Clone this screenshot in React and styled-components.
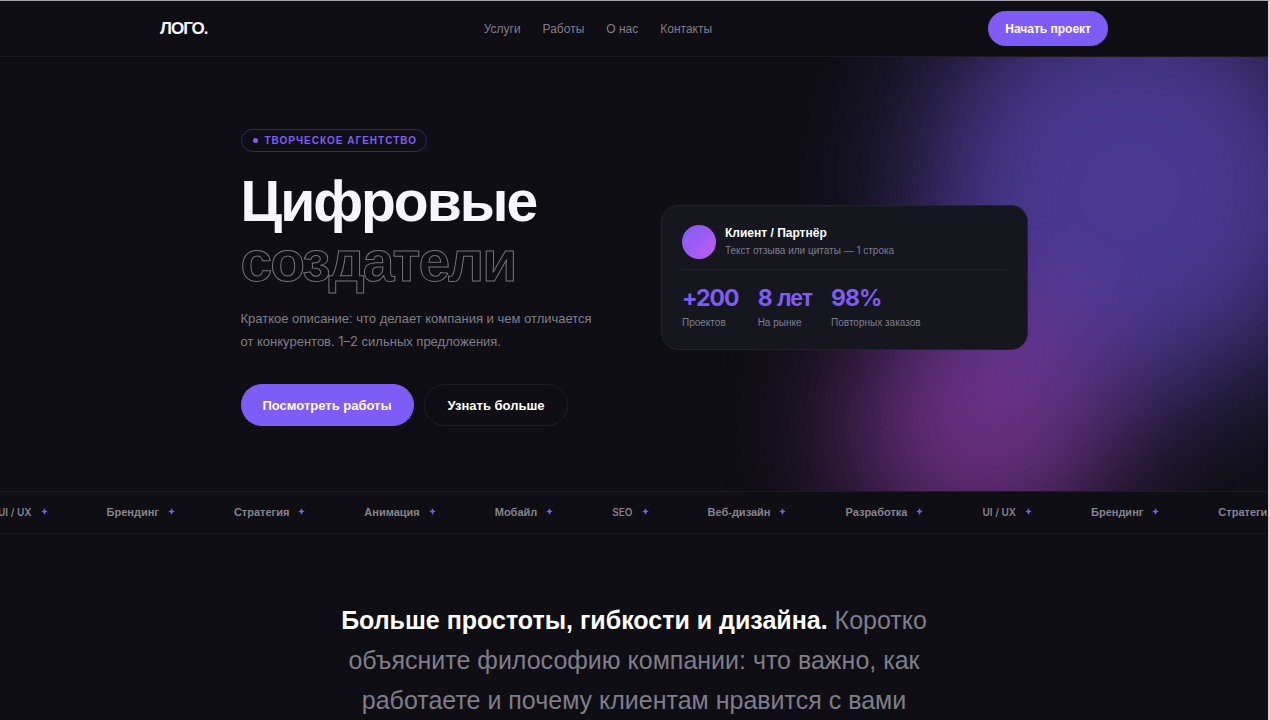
import React from "react";
import styled, { createGlobalStyle } from "styled-components";

const GlobalStyle = createGlobalStyle`
  * { box-sizing: border-box; }
  body {
    margin: 0;
    background: #0f0e14;
    color: #f7f5ff;
    font-family: "Liberation Sans", Arial, sans-serif;
    overflow: hidden;
  }
`;

const Page = styled.div`
  height: 100vh;
  overflow: hidden;
  border-top: 1px solid #a4a6ab;
  border-right: 2px solid #d4d4da;
`;

const Header = styled.header`
  border-bottom: 1px solid #1c1b23;
`;

const HeaderInner = styled.div`
  display: flex;
  justify-content: space-between;
  align-items: center;
  max-width: 948px;
  height: 55px;
  margin: 0 auto;
`;

const Logo = styled.a`
  color: #f7f5ff;
  font-size: 17px;
  font-weight: 700;
  letter-spacing: -1px;
  text-decoration: none;
`;

const Nav = styled.nav`
  display: flex;
  gap: 22px;
`;

const NavLink = styled.a`
  color: #7f7d8a;
  font-size: 12px;
  text-decoration: none;
`;

const Button = styled.button`
  height: ${(p) => (p.$small ? 35 : 42)}px;
  padding: 0 ${(p) => (p.$small ? 16 : p.$ghost ? 23 : 21)}px;
  border: 1px solid ${(p) => (p.$ghost ? "#1f1e27" : "#7e5cf6")};
  border-radius: 24px;
  background: ${(p) => (p.$ghost ? "transparent" : "#7e5cf6")};
  color: #fff;
  font-family: inherit;
  font-size: ${(p) => (p.$small ? 12 : 13)}px;
  font-weight: 700;
  white-space: nowrap;
`;

const Hero = styled.section`
  position: relative;
  overflow: hidden;
  padding: 72px 24px 65px;
`;

const Glow = styled.div`
  position: absolute;
  border-radius: 50%;
  pointer-events: none;
`;

const VioletGlow = styled(Glow)`
  top: -78px;
  right: -73px;
  width: 420px;
  height: 420px;
  background: #7c5cfc;
  filter: blur(66px);
  opacity: 0.54;
`;

const PinkGlow = styled(Glow)`
  right: 156px;
  bottom: -66px;
  width: 264px;
  height: 264px;
  background: #c04fe8;
  filter: blur(62px);
  opacity: 0.5;
`;

const HeroInner = styled.div`
  position: relative;
  display: grid;
  grid-template-columns: 1fr 1fr;
  gap: 54px;
  align-items: center;
  max-width: 787px;
  margin: 0 auto;
`;

const Intro = styled.div`
  white-space: nowrap;
`;

const Badge = styled.div`
  display: inline-flex;
  align-items: center;
  gap: 7px;
  height: 23px;
  padding: 0 9px 0 11px;
  border: 1px solid #33285f;
  border-radius: 12px;
  color: #7e5cf6;
  font-size: 10px;
  font-weight: 700;
  letter-spacing: 1px;
  text-transform: uppercase;
  vertical-align: top;
`;

const BadgeDot = styled.span`
  width: 5px;
  height: 5px;
  border-radius: 50%;
  background: #7e5cf6;
`;

const Title = styled.h1`
  margin: 19px 0 16px;
  font-size: 57px;
  font-weight: 700;
  line-height: 60px;
  letter-spacing: -2px;
`;

const Outline = styled.span`
  display: block;
  color: transparent;
  -webkit-text-stroke: 1px #74737a;
`;

const Lead = styled.p`
  margin: 0 0 31px;
  color: #7f7d8a;
  font-size: 13px;
  line-height: 23px;
`;

const Actions = styled.div`
  display: flex;
  gap: 10px;
`;

const Card = styled.article`
  padding: 18px 20px;
  border: 1px solid #24232d;
  border-radius: 17px;
  background: #16161f;
`;

const Client = styled.div`
  display: flex;
  align-items: center;
  gap: 9px;
  padding-bottom: 10px;
  border-bottom: 1px solid #24232d;
`;

const Avatar = styled.div`
  width: 34px;
  height: 34px;
  border-radius: 50%;
  background: linear-gradient(135deg, #7e5cf6, #c05cf0);
`;

const ClientName = styled.div`
  color: #fff;
  font-size: 12px;
  font-weight: 700;
  line-height: 18px;
`;

const Muted = styled.div`
  color: #7f7d8a;
  font-size: 10px;
  line-height: 17px;
`;

const Stats = styled.div`
  display: flex;
  gap: 19px;
  padding-top: 12px;
`;

const StatValue = styled.div`
  color: #7e5cf6;
  font-family: ${(p) => (p.$cyrillic ? '"Liberation Sans"' : "Inter")}, sans-serif;
  font-size: 23px;
  font-weight: 700;
  line-height: 32px;
  letter-spacing: -1px;
`;

const Latin = styled.span`
  font-family: Inter, sans-serif;
`;

const Ticker = styled.div`
  display: flex;
  align-items: center;
  height: 43px;
  padding-bottom: 2px;
  overflow: hidden;
  border-top: 1px solid #1c1b23;
  border-bottom: 1px solid #1c1b23;
`;

const TickerTrack = styled.div`
  display: flex;
  flex: none;
  gap: 59px;
  margin-left: -2px;
`;

const TickerItem = styled.span`
  display: flex;
  align-items: center;
  gap: 9px;
  color: #858390;
  font-family: ${(p) => (p.$latin ? "Inter" : '"Liberation Sans"')}, sans-serif;
  font-size: ${(p) => (p.$latin ? 10 : 11)}px;
  font-weight: ${(p) => (p.$latin ? 600 : 700)};
  line-height: 16px;
`;

const Spark = () => (
  <svg width="7" height="7" viewBox="0 0 8 8" fill="#7e5cf6" aria-hidden="true">
    <path d="M4 .4 5.2 2.8 7.6 4 5.2 5.2 4 7.6 2.8 5.2 .4 4 2.8 2.8Z" />
  </svg>
);

const About = styled.section`
  max-width: 640px;
  margin: 0 auto;
  padding: 66px 16px;
`;

const Statement = styled.p`
  margin: 0;
  color: #7f7d8a;
  font-size: 25px;
  line-height: 40px;
  text-align: center;

  strong { color: #fff; }
`;

const links = ["Услуги", "Работы", "О нас", "Контакты"];
const topics = [
  "UI / UX", "Брендинг", "Стратегия", "Анимация", "Мобайл", "SEO",
  "Веб-дизайн", "Разработка", "UI / UX", "Брендинг", "Стратегия",
];
const isLatin = (text) => /^[A-Z /]+$/.test(text);

export default function App() {
  return (
    <>
      <GlobalStyle />
      <Page>
        <Header>
          <HeaderInner>
            <Logo href="#">ЛОГО.</Logo>
            <Nav>
              {links.map((text) => <NavLink key={text} href="#">{text}</NavLink>)}
            </Nav>
            <Button $small>Начать проект</Button>
          </HeaderInner>
        </Header>
        <main>
          <Hero>
            <VioletGlow />
            <PinkGlow />
            <HeroInner>
              <Intro>
                <Badge><BadgeDot />Творческое агентство</Badge>
                <Title>Цифровые<Outline>создатели</Outline></Title>
                <Lead>
                  Краткое описание: что делает компания и чем отличается<br />
                  от конкурентов. <Latin>1–2</Latin> сильных предложения.
                </Lead>
                <Actions>
                  <Button>Посмотреть работы</Button>
                  <Button $ghost>Узнать больше</Button>
                </Actions>
              </Intro>
              <Card>
                <Client>
                  <Avatar />
                  <div>
                    <ClientName>Клиент / Партнёр</ClientName>
                    <Muted>Текст отзыва или цитаты — <Latin>1</Latin> строка</Muted>
                  </div>
                </Client>
                <Stats>
                  <div>
                    <StatValue>+200</StatValue>
                    <Muted>Проектов</Muted>
                  </div>
                  <div>
                    <StatValue $cyrillic><Latin>8</Latin> лет</StatValue>
                    <Muted>На рынке</Muted>
                  </div>
                  <div>
                    <StatValue>98%</StatValue>
                    <Muted>Повторных заказов</Muted>
                  </div>
                </Stats>
              </Card>
            </HeroInner>
          </Hero>
          <Ticker>
            <TickerTrack>
              {topics.map((text, i) => (
                <TickerItem key={i} $latin={isLatin(text)}>{text}<Spark /></TickerItem>
              ))}
            </TickerTrack>
          </Ticker>
          <About>
            <Statement>
              <strong>Больше простоты, гибкости и дизайна.</strong> Коротко
              объясните философию компании: что важно, как работаете и почему
              клиентам нравится с вами
            </Statement>
          </About>
        </main>
      </Page>
    </>
  );
}
